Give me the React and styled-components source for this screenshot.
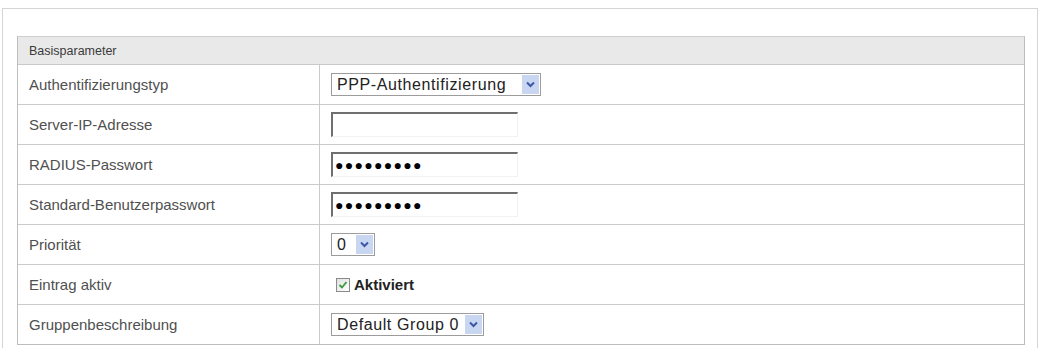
import React from "react";
import styled, { createGlobalStyle } from "styled-components";

const GlobalStyle = createGlobalStyle`
  body {
    margin: 0;
    background: #fff;
    font-family: "Liberation Sans", Arial, sans-serif;
  }
`;

const Panel = styled.div`
  margin: 8px 2px 0 2px;
  height: 340px;
  border: 1px solid #d4d4d4;
  border-bottom: none;
  padding: 27px 12px 0 14px;
  box-sizing: border-box;
`;

const Table = styled.div`
  border: 1px solid #bdbdbd;
  border-top-color: #cfcfcf;
`;

const HeaderRow = styled.div`
  height: 27px;
  display: flex;
  align-items: center;
  padding-left: 11px;
  background: #e9e9e9;
  border-bottom: 1px solid #c9c9c9;
  font-size: 12.5px;
  color: #3a3a3a;
`;

const Row = styled.div`
  display: grid;
  grid-template-columns: 302px 1fr;
  height: 39px;
  & + & {
    border-top: 1px solid #cbcbcb;
  }
`;

const Label = styled.div`
  display: flex;
  align-items: center;
  padding-left: 11px;
  border-right: 1px solid #cbcbcb;
  font-size: 15px;
  color: #505050;
`;

const Value = styled.div`
  display: flex;
  align-items: center;
  padding-left: 11px;
`;

const SelectBox = styled.div`
  display: flex;
  align-items: center;
  width: ${(p) => p.$width}px;
  height: 23px;
  box-sizing: border-box;
  border: 1px solid #9c9c9c;
  background: #fff;
  padding: 1px;
`;

const SelectText = styled.span`
  flex: 1;
  padding-left: 4px;
  font-size: 16px;
  letter-spacing: 0.6px;
  color: #222;
  white-space: nowrap;
`;

const ArrowButton = styled.span`
  width: 17px;
  height: 19px;
  display: flex;
  align-items: center;
  justify-content: center;
  background: #c9d6f2;
`;

const TextInput = styled.div`
  width: 187px;
  height: 25px;
  box-sizing: border-box;
  border-top: 2px solid #6f6f6f;
  border-left: 2px solid #6f6f6f;
  border-right: 1px solid #f2f2f2;
  border-bottom: 1px solid #f2f2f2;
  display: flex;
  align-items: center;
  padding-left: 2px;
  color: #000;
`;

const Dots = styled.span`
  font-size: 14px;
  letter-spacing: 1.3px;
  line-height: 1;
`;

const CheckWrap = styled.label`
  display: flex;
  align-items: center;
  gap: 4px;
  padding-left: 5px;
  font-size: 15px;
  font-weight: bold;
  color: #222;
`;

const CheckBox = styled.span`
  width: 14px;
  height: 14px;
  box-sizing: border-box;
  border: 1px solid #8a8a8a;
  background: linear-gradient(135deg, #e0e0e0, #ffffff);
  display: flex;
  align-items: center;
  justify-content: center;
`;

const Chevron = () => (
  <svg width="9" height="7" viewBox="0 0 9 7">
    <path d="M1 1.5 L4.5 5 L8 1.5" fill="none" stroke="#3d57a8" strokeWidth="2" />
  </svg>
);

const Select = ({ width, children }) => (
  <SelectBox $width={width}>
    <SelectText>{children}</SelectText>
    <ArrowButton>
      <Chevron />
    </ArrowButton>
  </SelectBox>
);

const rows = [
  { label: "Authentifizierungstyp", type: "select", value: "PPP-Authentifizierung", width: 210 },
  { label: "Server-IP-Adresse", type: "text", value: "" },
  { label: "RADIUS-Passwort", type: "password" },
  { label: "Standard-Benutzerpasswort", type: "password" },
  { label: "Priorität", type: "select", value: "0", width: 44 },
  { label: "Eintrag aktiv", type: "check", value: "Aktiviert" },
  { label: "Gruppenbeschreibung", type: "select", value: "Default Group 0", width: 153 },
];

const renderValue = (row) => {
  if (row.type === "select") return <Select width={row.width}>{row.value}</Select>;
  if (row.type === "text") return <TextInput />;
  if (row.type === "password")
    return (
      <TextInput>
        <Dots>●●●●●●●●●</Dots>
      </TextInput>
    );
  return (
    <CheckWrap>
      <CheckBox>
        <svg width="10" height="10" viewBox="0 0 10 10">
          <path d="M1.5 5 L4 7.5 L8.5 2" fill="none" stroke="#3c9a3c" strokeWidth="1.8" />
        </svg>
      </CheckBox>
      {row.value}
    </CheckWrap>
  );
};

export default function App() {
  return (
    <>
      <GlobalStyle />
      <Panel>
        <Table>
          <HeaderRow>Basisparameter</HeaderRow>
          {rows.map((row) => (
            <Row key={row.label}>
              <Label>{row.label}</Label>
              <Value>{renderValue(row)}</Value>
            </Row>
          ))}
        </Table>
      </Panel>
    </>
  );
}
